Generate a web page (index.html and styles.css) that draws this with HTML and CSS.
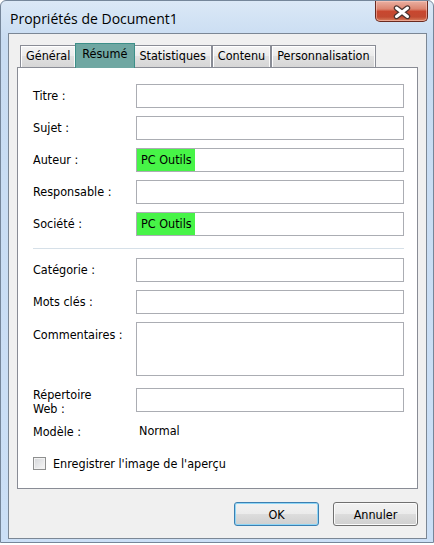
FILE: index.html
```html
<!DOCTYPE html>
<html lang="fr">
<head>
  <meta charset="UTF-8">
  <meta name="viewport" content="width=device-width, initial-scale=1.0">
  <title>Propriétés de Document1</title>
  <link rel="stylesheet" href="styles.css">
</head>
<body>
  <div class="window">
    <div class="titlebar">
      <span class="title">Propriétés de Document1</span>
      <button class="close" aria-label="Fermer">
        <svg width="53" height="21" viewBox="0 0 53 21">
          <path d="M20.5 7 L31.5 15.5 M31.5 7 L20.5 15.5" stroke="#4a3430" stroke-width="5.4" stroke-linecap="round"/>
          <path d="M20.5 7 L31.5 15.5 M31.5 7 L20.5 15.5" stroke="#fff" stroke-width="3" stroke-linecap="round"/>
        </svg>
      </button>
    </div>
    <div class="client">
      <div class="tabs">
        <div class="tab">Général</div>
        <div class="tab active">Résumé</div>
        <div class="tab">Statistiques</div>
        <div class="tab">Contenu</div>
        <div class="tab">Personnalisation</div>
      </div>
      <div class="panel">
        <div class="form">
          <div class="label">Titre :</div><div class="field"></div>
          <div class="label">Sujet :</div><div class="field"></div>
          <div class="label">Auteur :</div><div class="field"><span class="hl">PC Outils</span></div>
          <div class="label">Responsable :</div><div class="field"></div>
          <div class="label">Société :</div><div class="field"><span class="hl">PC Outils</span></div>
          <div class="sep"></div>
          <div class="label">Catégorie :</div><div class="field"></div>
          <div class="label">Mots clés :</div><div class="field"></div>
          <div class="label top">Commentaires :</div><div class="field area"></div>
          <div class="label two">Répertoire<br>Web :</div><div class="field gap"></div>
          <div class="label">Modèle :</div><div class="value">Normal</div>
        </div>
        <div class="check"><span class="box"></span>Enregistrer l'image de l'aperçu</div>
      </div>
      <div class="footer">
        <button class="btn default">OK</button>
        <button class="btn">Annuler</button>
      </div>
    </div>
  </div>
</body>
</html>
```

FILE: styles.css
```css
body {
  margin: 0;
  background: #fff;
  font-family: "DejaVu Sans Condensed", "Liberation Sans", sans-serif;
  font-size: 12.5px;
  color: #000;
}
.window {
  width: 434px;
  height: 543px;
  box-sizing: border-box;
  border: 1px solid #75869a;
  border-radius: 6px 6px 0 0;
  padding: 0 6px 3px 7px;
  display: flex;
  flex-direction: column;
  background: linear-gradient(180deg, #dbe8f6 0, #c8dcf2 40px, #cbdff6 100%);
}
.titlebar {
  height: 32px;
  display: flex;
  justify-content: space-between;
  align-items: flex-start;
  margin-right: -1px;
}
.title {
  padding: 8px 0 0 2px;
  font-family: "Open Sans", "Noto Sans", sans-serif;
  font-size: 14px;
  line-height: 20px;
}
.close {
  display: block;
  width: 53px;
  height: 21px;
  padding: 0;
  border: 1px solid #6a2a20;
  border-top: 0;
  border-radius: 0 0 5px 5px;
  background: linear-gradient(180deg, #eab0a2 0, #dc8570 40%, #c8472f 52%, #c24a31 80%, #d8805f 100%);
  box-shadow: inset 0 0 0 1px rgba(255, 210, 200, 0.5);
}
.close svg {
  display: block;
}
.client {
  flex: 1;
  border: 1px solid #7b8795;
  background: #f0f0f0;
  padding: 0 8px;
  display: flex;
  flex-direction: column;
}
.tabs {
  display: flex;
  align-items: flex-end;
  height: 33px;
  padding-left: 3px;
}
.tab {
  height: 22px;
  box-sizing: border-box;
  padding: 0 5px;
  border: 1px solid #898c95;
  border-bottom: none;
  background: linear-gradient(180deg, #f4f4f4, #ebebeb 50%, #e0e0e0 50%, #d6d6d6);
  box-shadow: inset 1px 1px 0 #fff, inset -1px 0 0 #fafafa;
  line-height: 20px;
}
.tab.active {
  height: 25px;
  padding: 0 7px 0 6px;
  margin: 0 -2px -1px -1px;
  position: relative;
  z-index: 1;
  background: #6fa7a2;
  border-color: #3c8f88;
  box-shadow: none;
}
.panel {
  border: 1px solid #898c95;
  background: #fff;
  padding: 16px 0 13px 15px;
}
.form {
  display: grid;
  grid-template-columns: 103px 268px;
  row-gap: 8px;
  align-items: center;
}
.label {
  line-height: 15px;
  margin-top: -1px;
}
.label.top {
  align-self: start;
  margin-top: 0;
  padding-top: 5px;
}
.label.two {
  line-height: 14px;
  margin: 4px 0 -4px;
}
.field {
  height: 24px;
  box-sizing: border-box;
  border: 1px solid #abadb3;
  background: #fff;
}
.field.area {
  height: 54px;
}
.field.gap {
  margin-top: 4px;
}
.hl {
  display: inline-block;
  height: 22px;
  line-height: 21px;
  padding: 0 3px 0 4px;
  background: #47f447;
}
.sep {
  grid-column: 1 / -1;
  height: 1px;
  margin: 4px 0 1px;
  background: #d6e0e8;
}
.value {
  line-height: 24px;
  padding-left: 3px;
  margin-top: -1px;
}
.check {
  display: flex;
  align-items: center;
  gap: 7px;
  height: 24px;
  margin-top: 8px;
}
.box {
  width: 13px;
  height: 13px;
  box-sizing: border-box;
  border: 1px solid #8e8f8f;
  background: linear-gradient(135deg, #d4d6d9, #f7f7f7);
  box-shadow: inset 0 0 0 1px #f2f2f2;
}
.footer {
  display: flex;
  justify-content: flex-end;
  gap: 14px;
  margin-top: 13px;
}
.btn {
  width: 85px;
  height: 24px;
  padding: 0;
  border: 1px solid #707070;
  border-radius: 3px;
  background: linear-gradient(180deg, #f2f2f2, #ebebeb 50%, #dddddd 50%, #cfcfcf);
  box-shadow: inset 0 0 0 1px #fbfbfb;
  font: inherit;
  color: #000;
}
.btn.default {
  border-color: #3c7fb1;
  box-shadow: inset 0 0 0 1px #8fd6f6;
}
```
